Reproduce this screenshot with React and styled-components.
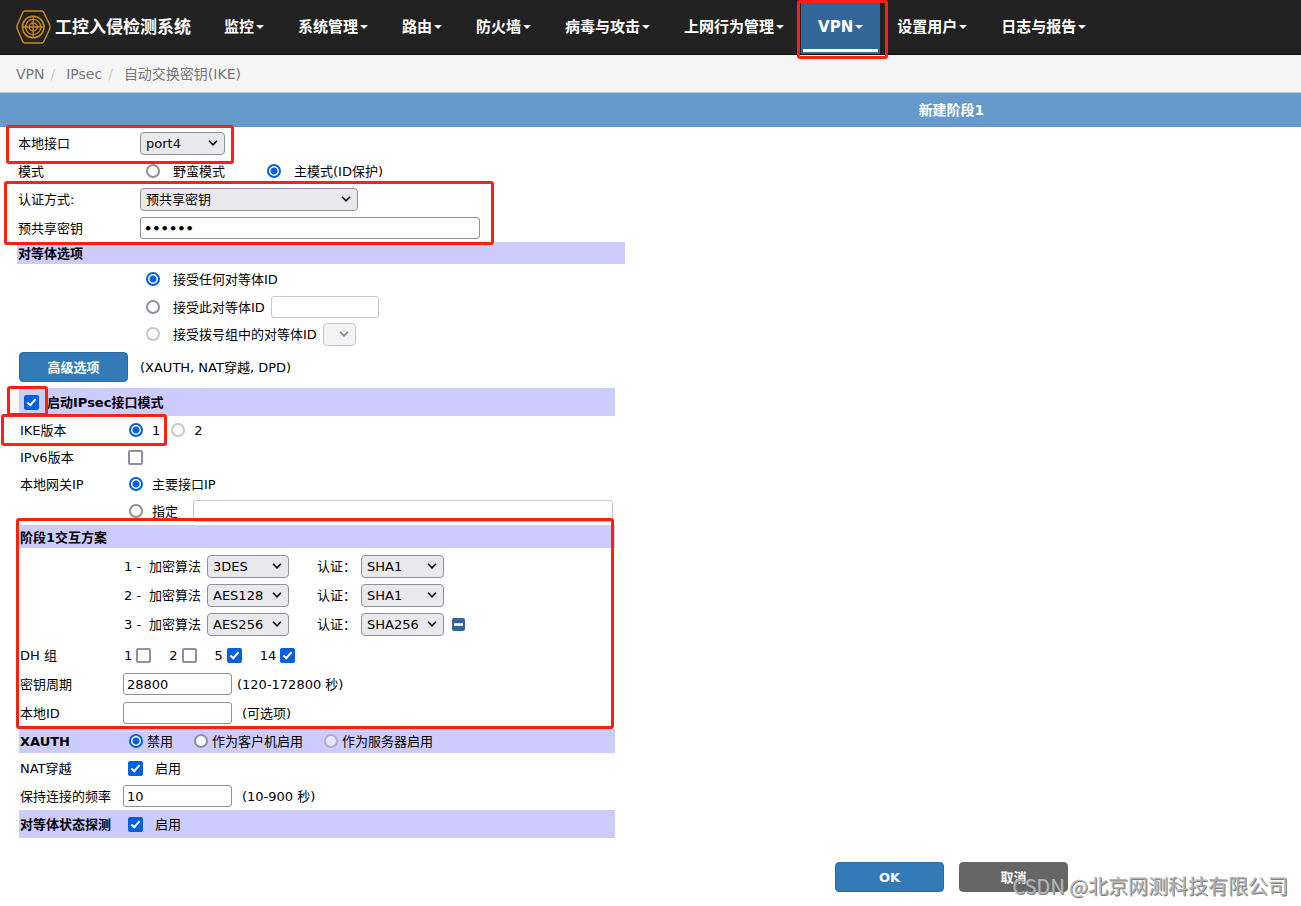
import React from "react"
import styled, { createGlobalStyle } from "styled-components"

const GlobalStyle = createGlobalStyle`
  *, *::before, *::after {
    box-sizing: border-box;
  }
  body {
    margin: 0;
    background: #fff;
    color: #000;
    font-family: "DejaVu Sans", "Noto Sans CJK SC", sans-serif;
    font-size: 13px;
    line-height: 20px;
  }
  input, select, button {
    margin: 0;
    font: inherit;
    color: inherit;
  }
`
const Page = styled.div`
  position: relative;
  min-height: 100vh;
  overflow: hidden;
`
const Header = styled.header`
  display: flex;
  align-items: stretch;
  height: 55px;
  background: #222;
  border-bottom: 1px solid #080808;
`
const Brand = styled.a`
  display: flex;
  align-items: center;
  gap: 4px;
  width: 207px;
  padding-left: 16px;
  color: #fff;
  font-size: 17px;
  font-weight: 700;
  text-decoration: none;
  white-space: nowrap;
`
const Nav = styled.nav`
  display: flex;
`
const NavLink = styled.a`
  display: flex;
  align-items: center;
  gap: 2px;
  padding: 0 17px;
  color: #fff;
  font-size: 15px;
  font-weight: 700;
  text-decoration: none;
  white-space: nowrap;
  background: ${({ $active }) => ($active ? "#336699" : "transparent")};
  box-shadow: ${({ $active }) => ($active ? "inset 0 -2px #336699, inset 2px 0 #336699, inset -2px 0 #336699, inset 0 -5px #fff" : "none")};
`
const Caret = styled.span`
  border-top: 4px solid #fff;
  border-left: 4px solid transparent;
  border-right: 4px solid transparent;
`
const Breadcrumb = styled.ol`
  display: flex;
  align-items: center;
  height: 38px;
  margin: 0;
  padding: 0 16px;
  list-style: none;
  background: #f5f5f5;
  border-bottom: 1px solid #ccc;
  color: #777;
  font-size: 14px;
`
const Crumb = styled.li`
  & + &::before {
    content: "/";
    padding: 0 11px 0 6px;
    color: #ccc;
  }
`
const TitleBar = styled.h1`
  margin: 0;
  padding: 7px 0 7px 602px;
  background: #6699cc;
  color: #fff;
  font-size: 14px;
  line-height: 20px;
  text-align: center;
`
const Section = styled.section`
  display: flex;
  flex-direction: column;
  gap: ${({ $gap }) => $gap || 0}px;
  max-width: ${({ $wide }) => ($wide ? 625 : 615)}px;
  padding: ${({ $pad }) => $pad || "0"};
`
const Row = styled.div`
  display: flex;
  align-items: center;
  height: ${({ $height }) => $height || 28}px;
  padding-left: ${({ $indent }) => $indent || 20}px;
  white-space: nowrap;
`
const Bar = styled(Row)`
  margin-left: ${({ $left }) => $left || 19}px;
  padding-left: 1px;
  background: #ccccff;
  font-weight: 700;
`
const Name = styled.label`
  flex: none;
  width: ${({ $width }) => $width || 103}px;
  padding-top: 2px;
  font-weight: ${({ $bold }) => ($bold ? 700 : 400)};
`
const Text = styled.span`
  padding-top: 2px;
`
const Choice = styled.label`
  display: inline-flex;
  align-items: center;
  gap: ${({ $gap }) => $gap}px;
  margin-left: ${({ $space }) => $space || 0}px;
  font-weight: ${({ $bold }) => ($bold ? 700 : 400)};
`
const Radio = styled.input.attrs({ type: "radio" })`
  appearance: none;
  flex: none;
  width: 14px;
  height: 14px;
  border: 2px solid #8f8f9d;
  border-radius: 50%;
  background: #fff;
  &:checked {
    border-color: #0060df;
    background: radial-gradient(circle, #0060df 3px, #fff 4px);
  }
  &:disabled {
    opacity: 0.5;
  }
`
const Checkbox = styled.input.attrs({ type: "checkbox" })`
  appearance: none;
  flex: none;
  display: grid;
  place-items: center;
  width: 15px;
  height: 15px;
  border: 2px solid #8f8f9d;
  border-radius: 2px;
  background: #fff;
  &:checked {
    border-color: #0060df;
    background: #0060df;
  }
  &:checked::after {
    content: "";
    width: 5px;
    height: 9px;
    margin-top: -2px;
    border: solid #fff;
    border-width: 0 2px 2px 0;
    transform: rotate(42deg);
  }
`
const TextInput = styled.input`
  flex: none;
  width: ${({ $width }) => $width || 109}px;
  height: 22px;
  margin-left: ${({ $space }) => $space || 0}px;
  padding: 0 3px;
  border: 1px solid ${({ $dim }) => ($dim ? "#c7c7ce" : "#8f8f9d")};
  border-radius: 3px;
  background: #fff;
  &[type="password"] {
    font-weight: 700;
  }
`
const SelectBox = styled.span`
  display: inline-grid;
  flex: none;
  align-items: center;
  width: ${({ $width }) => $width}px;
  margin-left: ${({ $space }) => $space || 0}px;
  opacity: ${({ $dim }) => ($dim ? 0.5 : 1)};
  & > * {
    grid-area: 1 / 1;
  }
  & > svg {
    justify-self: end;
    margin-right: 7px;
    pointer-events: none;
  }
`
const SelectInput = styled.select`
  appearance: none;
  width: 100%;
  height: 23px;
  padding: 1px 5px 0;
  border: 1px solid #8f8f9d;
  border-radius: 4px;
  background: #e9e9ed;
  opacity: 1;
`
const Hint = styled(Text)`
  margin-left: ${({ $space }) => $space}px;
`
const Num = styled(Text)`
  flex: none;
  width: 25px;
`
const Button = styled.button`
  width: 109px;
  height: 30px;
  padding: 1px 0 0;
  border: 1px solid ${({ $grey }) => ($grey ? "#666" : "#2e6da4")};
  border-radius: 4px;
  background: ${({ $grey }) => ($grey ? "#666" : "#337ab7")};
  color: #fff;
  font-weight: 700;
`
const IconButton = styled.button`
  display: flex;
  margin-left: 8px;
  padding: 0;
  border: 0;
  background: none;
`
const Actions = styled.div`
  display: flex;
  justify-content: center;
  gap: 15px;
  padding: 24px 0 14px 602px;
`
const Mark = styled.span`
  position: absolute;
  left: ${({ $x }) => $x}px;
  top: ${({ $y }) => $y}px;
  width: ${({ $w }) => $w}px;
  height: ${({ $h }) => $h}px;
  border: 3px solid #ff2010;
  border-radius: 3px;
  pointer-events: none;
`
const Watermark = styled.div`
  position: absolute;
  right: 13px;
  bottom: 5px;
  color: #b4b4b4;
  font-family: "Noto Sans CJK SC", sans-serif;
  font-size: 20px;
  font-weight: 400;
  line-height: 30px;
  text-shadow: 1px 1px #808080;
  white-space: nowrap;
  pointer-events: none;
`

const Logo = () => (
  <svg width="35" height="34" viewBox="0 0 35 34" fill="none" stroke="#c58a1b" aria-hidden="true">
    <path d="M8.500 1h17.500l1.500 1L33.500 14.500q1 2.500 0 5L27.500 32 26 33H8.500L7 32 1.500 19.500q-1-2.500 0-5L7 2z" strokeWidth="1.500" />
    <circle cx="17.200" cy="17" r="10.800" strokeWidth="1.500" />
    <circle cx="17.200" cy="17" r="7.600" strokeWidth="1.400" />
    <circle cx="17.200" cy="17" r="4" strokeWidth="1.400" />
    <path d="M17.200 6v22M6 17h22.400" strokeWidth="1.300" />
  </svg>
)

const Select = ({ width, space, dim, options, ...rest }) => (
  <SelectBox $width={width} $space={space} $dim={dim}>
    <SelectInput disabled={dim} {...rest}>
      {options.map(option => <option key={option}>{option}</option>)}
    </SelectInput>
    <svg width="10" height="6" viewBox="0 0 10 6" fill="none" stroke="#000" strokeWidth="1.600">
      <path d="M1 .8l4 4 4-4" />
    </svg>
  </SelectBox>
)

const menu = ["监控", "系统管理", "路由", "防火墙", "病毒与攻击", "上网行为管理", "VPN", "设置用户", "日志与报告"]

const proposals = [
  { cipher: "3DES", auth: "SHA1" },
  { cipher: "AES128", auth: "SHA1" },
  { cipher: "AES256", auth: "SHA256", removable: true },
]

const dhGroups = [
  { id: 1 },
  { id: 2 },
  { id: 5, on: true },
  { id: 14, on: true },
]

const marks = [
  { x: 797, y: 0, w: 91, h: 59 },
  { x: 6, y: 125, w: 228, h: 39 },
  { x: 4, y: 181, w: 490, h: 64 },
  { x: 7, y: 386, w: 41, h: 30 },
  { x: 1, y: 414, w: 166, h: 32 },
  { x: 16, y: 518, w: 598, h: 211 },
]

const App = () => (
  <Page>
    <GlobalStyle />
    <Header>
      <Brand href="#"><Logo />工控入侵检测系统</Brand>
      <Nav>
        {menu.map(item => (
          <NavLink key={item} href="#" $active={item === "VPN"}>{item}<Caret /></NavLink>
        ))}
      </Nav>
    </Header>
    <Breadcrumb>
      <Crumb>VPN</Crumb>
      <Crumb>IPsec</Crumb>
      <Crumb>自动交换密钥(IKE)</Crumb>
    </Breadcrumb>
    <TitleBar>新建阶段1</TitleBar>

    <form onSubmit={e => e.preventDefault()}>
      <Section $wide $pad="1px 0 0">
        <Row $height={30} $indent={18}>
          <Name $width={122} htmlFor="iface">本地接口</Name>
          <Select id="iface" width={85} options={["port4"]} />
        </Row>
        <Row $height={26} $indent={18}>
          <Name as="span" $width={122}>模式</Name>
          <Choice $gap={13} $space={6}><Radio name="mode" /><Text>野蛮模式</Text></Choice>
          <Choice $gap={13} $space={42}><Radio name="mode" defaultChecked /><Text>主模式(ID保护)</Text></Choice>
        </Row>
        <Row $height={30} $indent={18}>
          <Name $width={122} htmlFor="method">认证方式:</Name>
          <Select id="method" width={218} options={["预共享密钥"]} />
        </Row>
        <Row $indent={18}>
          <Name $width={122} htmlFor="psk">预共享密钥</Name>
          <TextInput id="psk" type="password" $width={340} defaultValue="secret" />
        </Row>
        <Bar $height={22} $left={17}><Text>对等体选项</Text></Bar>
        <Row $height={30} $indent={146}>
          <Choice $gap={13}><Radio name="peer" defaultChecked /><Text>接受任何对等体ID</Text></Choice>
        </Row>
        <Row $height={26} $indent={146}>
          <Choice $gap={13}><Radio name="peer" /><Text>接受此对等体ID</Text></Choice>
          <TextInput aria-label="对等体ID" $dim $width={108} $space={6} />
        </Row>
        <Row $indent={146}>
          <Choice $gap={13}><Radio name="peer" disabled /><Text>接受拨号组中的对等体ID</Text></Choice>
          <Select aria-label="拨号组" width={33} space={6} dim options={[""]} />
        </Row>
        <Row $height={38} $indent={19}>
          <Button type="button">高级选项</Button>
          <Hint $space={12}>(XAUTH, NAT穿越, DPD)</Hint>
        </Row>
      </Section>

      <Section $pad="2px 0 1px">
        <Bar>
          <Choice $bold $gap={8} $space={4}><Checkbox defaultChecked /><Text>启动IPsec接口模式</Text></Choice>
        </Bar>
        <Row>
          <Name as="span">IKE版本</Name>
          <Choice $gap={9} $space={6}><Radio name="ike" defaultChecked /><Text>1</Text></Choice>
          <Choice $gap={9} $space={11}><Radio name="ike" disabled /><Text>2</Text></Choice>
        </Row>
        <Row $height={26}>
          <Name htmlFor="ipv6">IPv6版本</Name>
          <Choice $space={5}><Checkbox id="ipv6" /></Choice>
        </Row>
        <Row>
          <Name as="span">本地网关IP</Name>
          <Choice $gap={9} $space={6}><Radio name="gateway" defaultChecked /><Text>主要接口IP</Text></Choice>
        </Row>
        <Row $height={26} $indent={129}>
          <Choice $gap={9}><Radio name="gateway" /><Text>指定</Text></Choice>
          <TextInput aria-label="指定IP" $dim $width={420} $space={15} />
        </Row>
      </Section>

      <Section>
        <Bar $height={23}><Text>阶段1交互方案</Text></Bar>
      </Section>
      <Section $gap={1} $pad="4px 0 3px">
        {proposals.map(({ cipher, auth, removable }, i) => (
          <Row key={cipher} $indent={124}>
            <Num>{i + 1} -</Num>
            <Text as="label" htmlFor={`cipher${i}`}>加密算法</Text>
            <Select id={`cipher${i}`} width={82} space={6} options={[cipher]} />
            <Hint as="label" htmlFor={`auth${i}`} $space={28}>认证：</Hint>
            <Select id={`auth${i}`} width={83} space={5} options={[auth]} />
            {removable && (
              <IconButton type="button" aria-label="删除">
                <svg width="13" height="13" viewBox="0 0 13 13">
                  <rect width="13" height="13" rx="2" fill="#336699" />
                  <path d="M2 6.500h9" stroke="#fff" strokeWidth="2.600" />
                </svg>
              </IconButton>
            )}
          </Row>
        ))}
      </Section>
      <Section $gap={1} $pad="0 0 2px">
        <Row>
          <Name as="span">DH 组</Name>
          {dhGroups.map(({ id, on }, i) => (
            <Choice key={id} $gap={4} $space={i ? 18 : 1}><Text>{id}</Text><Checkbox defaultChecked={on} /></Choice>
          ))}
        </Row>
        <Row>
          <Name htmlFor="life">密钥周期</Name>
          <TextInput id="life" defaultValue="28800" />
          <Hint $space={5}>(120-172800 秒)</Hint>
        </Row>
        <Row>
          <Name htmlFor="localid">本地ID</Name>
          <TextInput id="localid" />
          <Hint $space={10}>(可选项)</Hint>
        </Row>
      </Section>

      <Section>
        <Bar $height={24}>
          <Name as="span" $bold>XAUTH</Name>
          <Choice $gap={4} $space={6}><Radio name="xauth" defaultChecked /><Text>禁用</Text></Choice>
          <Choice $gap={4} $space={21}><Radio name="xauth" /><Text>作为客户机启用</Text></Choice>
          <Choice $gap={4} $space={21}><Radio name="xauth" disabled /><Text>作为服务器启用</Text></Choice>
        </Bar>
      </Section>
      <Section $pad="1px 0 0">
        <Row>
          <Name as="span">NAT穿越</Name>
          <Choice $gap={12} $space={5}><Checkbox defaultChecked /><Text>启用</Text></Choice>
        </Row>
        <Row>
          <Name htmlFor="keepalive">保持连接的频率</Name>
          <TextInput id="keepalive" defaultValue="10" />
          <Hint $space={10}>(10-900 秒)</Hint>
        </Row>
        <Bar>
          <Name as="span" $bold>对等体状态探测</Name>
          <Choice $gap={12} $space={5}><Checkbox defaultChecked /><Text>启用</Text></Choice>
        </Bar>
      </Section>

      <Actions>
        <Button type="submit">OK</Button>
        <Button type="button" $grey>取消</Button>
      </Actions>
    </form>

    {marks.map(({ x, y, w, h }) => <Mark key={y} $x={x} $y={y} $w={w} $h={h} />)}
    <Watermark>CSDN @北京网测科技有限公司</Watermark>
  </Page>
)

export default App
